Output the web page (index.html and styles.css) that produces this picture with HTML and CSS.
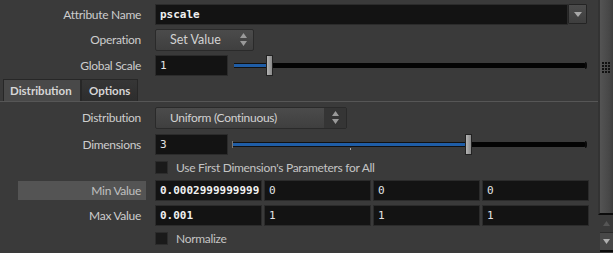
FILE: index.html
```html
<!DOCTYPE html>
<html>
<head>
<meta charset="utf-8">
<link rel="stylesheet" href="styles.css">
</head>
<body>
<div class="app">
  <div class="main">
    <div class="row r1">
      <div class="lbl">Attribute Name</div>
      <div class="field wide mono bold">pscale</div>
      <div class="menu-btn"><svg width="8" height="5" viewBox="0 0 8 5"><path d="M0 0H8L4 5Z" fill="#a8a8a8"/></svg></div>
    </div>
    <div class="row r2">
      <div class="lbl">Operation</div>
      <div class="combo op"><span class="combo-text">Set Value</span><span class="spin"><svg width="7" height="13" viewBox="0 0 7 13"><path d="M3.5 0L7 5H0Z M0 8H7L3.5 13Z" fill="#9a9a9a"/></svg></span></div>
    </div>
    <div class="row r3">
      <div class="lbl">Global Scale</div>
      <div class="field short mono">1</div>
      <div class="slider">
        <div class="track"><div class="fill" style="width:32px"></div></div>
        <div class="cap"></div>
        <div class="handle" style="left:32px"></div>
      </div>
    </div>
    <div class="tabs">
      <div class="tab active">Distribution</div>
      <div class="tab">Options</div>
    </div>
    <div class="pane">
      <div class="row p1">
        <div class="lbl">Distribution</div>
        <div class="combo dist"><span class="combo-text">Uniform (Continuous)</span><span class="spin dark"><svg width="7" height="13" viewBox="0 0 7 13"><path d="M3.5 0L7 5H0Z M0 8H7L3.5 13Z" fill="#9a9a9a"/></svg></span></div>
      </div>
      <div class="row p2">
        <div class="lbl">Dimensions</div>
        <div class="field short mono">3</div>
        <div class="slider s2">
          <div class="lcap"></div>
          <div class="track"><div class="fill" style="width:232px"></div></div>
          <div class="tick" style="left:117px"></div>
          <div class="cap"></div>
          <div class="handle" style="left:232px"></div>
        </div>
      </div>
      <div class="row p3">
        <div class="lbl"></div>
        <div class="check"></div>
        <div class="check-text">Use First Dimension's Parameters for All</div>
      </div>
      <div class="row p4">
        <div class="lbl hl">Min Value</div>
        <div class="fields">
          <div class="field cell mono bold">0.0002999999999</div>
          <div class="field cell mono">0</div>
          <div class="field cell mono">0</div>
          <div class="field cell mono">0</div>
        </div>
      </div>
      <div class="row p5">
        <div class="lbl">Max Value</div>
        <div class="fields">
          <div class="field cell mono bold">0.001</div>
          <div class="field cell mono">1</div>
          <div class="field cell mono">1</div>
          <div class="field cell mono">1</div>
        </div>
      </div>
      <div class="row p6">
        <div class="lbl"></div>
        <div class="check"></div>
        <div class="check-text">Normalize</div>
      </div>
    </div>
  </div>
  <div class="scrollbar">
    <div class="thumb">
      <svg class="grip" width="8" height="11" viewBox="0 0 8 11">
        <g fill="#111">
          <rect x="0" y="0" width="2" height="2"/><rect x="3" y="0" width="2" height="2"/><rect x="6" y="0" width="2" height="2"/>
          <rect x="0" y="3" width="2" height="2"/><rect x="3" y="3" width="2" height="2"/><rect x="6" y="3" width="2" height="2"/>
          <rect x="0" y="6" width="2" height="2"/><rect x="3" y="6" width="2" height="2"/><rect x="6" y="6" width="2" height="2"/>
          <rect x="0" y="9" width="2" height="2"/><rect x="3" y="9" width="2" height="2"/><rect x="6" y="9" width="2" height="2"/>
        </g>
      </svg>
    </div>
    <div class="sb-up"><svg width="7" height="5" viewBox="0 0 7 5"><path d="M3.5 0L7 5H0Z" fill="#555"/></svg></div>
    <div class="sb-down"><svg width="7" height="5" viewBox="0 0 7 5"><path d="M0 0H7L3.5 5Z" fill="#b0b0b0"/></svg></div>
  </div>
</div>
</body>
</html>
```

FILE: styles.css
```css
html, body {
  margin: 0;
  padding: 0;
  background: #3a3a3a;
}
body {
  width: 613px;
  height: 253px;
  overflow: hidden;
  font-family: "Lato", "Noto Sans", sans-serif;
  font-size: 12px;
  letter-spacing: -0.3px;
  color: #cfcfcf;
}
.app {
  display: flex;
  height: 253px;
}
.main {
  width: 598px;
  padding-top: 4px;
  box-sizing: border-box;
}
.row {
  display: flex;
  align-items: center;
  height: 21px;
}
.r2 { margin-top: 4px; }
.r3 { margin-top: 5px; }
.lbl {
  width: 146px;
  flex: none;
  text-align: right;
  padding-right: 5px;
  box-sizing: border-box;
  margin-right: 9px;
  color: #cdcdcd;
  white-space: nowrap;
}
.lbl.hl {
  margin-left: 18px;
  width: 128px;
  background: #545454;
  height: 19px;
  line-height: 19px;
  color: #c0c0c0;
}
.field {
  height: 21px;
  box-sizing: border-box;
  background: #131313;
  border: 1px solid #2b2b2b;
  color: #e4e4e4;
  padding-left: 4px;
  line-height: 19px;
  overflow: hidden;
  white-space: nowrap;
  letter-spacing: 0;
}
.mono {
  font-family: "DejaVu Sans Mono", monospace;
  font-size: 11px;
}
.bold { font-weight: bold; color: #f0f0f0; }
.wide { width: 413px; }
.short { width: 73px; }
.menu-btn {
  width: 19px;
  height: 20px;
  align-self: flex-start;
  box-sizing: border-box;
  border: 1px solid #242424;
  border-radius: 1px;
  background: linear-gradient(#4c4c4c, #3e3e3e);
  display: flex;
  align-items: center;
  justify-content: center;
}
.combo {
  height: 22px;
  box-sizing: border-box;
  border: 1px solid #2a2a2a;
  border-radius: 2px;
  background: linear-gradient(#4b4b4b, #3f3f3f);
  display: flex;
  align-items: center;
  color: #d2d2d2;
}
.combo-text {
  flex: 1;
  padding-left: 14px;
  white-space: nowrap;
}
.op .combo-text { font-size: 12.5px; letter-spacing: 0; }
.op { width: 99px; }
.dist { width: 192px; }
.spin {
  width: 19px;
  height: 20px;
  display: flex;
  align-items: center;
  justify-content: center;
}
.spin.dark { width: 22px; background: #353535; }
.slider {
  position: relative;
  width: 353px;
  height: 21px;
  margin-left: 6px;
}
.track {
  position: absolute;
  left: 0;
  right: 1px;
  top: 8px;
  height: 5px;
  background: #030303;
  border-radius: 0 2px 2px 0;
}
.fill {
  height: 3px;
  border-top: 1px solid #111;
  border-bottom: 1px solid #111;
  background: #1f5da6;
}
.cap {
  position: absolute;
  right: 0;
  top: 7px;
  width: 2px;
  height: 7px;
  background: #0a0a0a;
  border-radius: 0 2px 2px 0;
}
.lcap {
  position: absolute;
  left: -1px;
  top: 7px;
  width: 1px;
  height: 7px;
  background: #777;
}
.tick {
  position: absolute;
  top: 14px;
  width: 1px;
  height: 2px;
  background: #aaa;
}
.handle {
  position: absolute;
  top: 0;
  width: 7px;
  height: 21px;
  box-sizing: border-box;
  border: 1px solid #222;
  background: linear-gradient(90deg, #b4b4b4, #8a8a8a);
}
.s2 { margin-left: 5px; width: 354px; }
.tabs {
  display: flex;
  margin-top: 3px;
  padding-left: 3px;
  border-bottom: 1px solid #565656;
  height: 22px;
}
.tab {
  height: 22px;
  box-sizing: border-box;
  border: 1px solid #272727;
  border-bottom: none;
  font-weight: bold;
  font-size: 11.5px;
  letter-spacing: 0;
  line-height: 21px;
  color: #d6d6d6;
  background: linear-gradient(#363636, #2d2d2d);
}
.tab.active {
  background: #494949;
  width: 78px;
  padding: 0 0 0 6px;
}
.tab + .tab { width: 57px; padding: 0 0 0 7px; }
.pane { padding-top: 5px; }
.p2 { margin-top: 6px; }
.p3 { margin-top: 2px; }
.p4 { margin-top: 2px; }
.p5 { margin-top: 4px; }
.p6 { margin-top: 2px; }
.check {
  width: 13px;
  height: 13px;
  box-sizing: border-box;
  background: #1a1a1a;
  border: 1px solid #2c2c2c;
}
.check-text {
  margin-left: 8px;
  color: #c4c4c4;
  white-space: nowrap;
}
.fields {
  display: flex;
  gap: 2px;
}
.cell { width: 107px; }
.scrollbar {
  width: 15px;
  height: 253px;
  display: flex;
  flex-direction: column;
  background: #3a3a3a;
}
.thumb {
  height: 213px;
  flex: none;
  border-left: 2px solid #333;
  border-bottom: 2px solid #0c0c0c;
  background: linear-gradient(90deg, #545454, #474747 70%, #3e3e3e);
  position: relative;
}
.grip {
  position: absolute;
  left: 2px;
  top: 62px;
}
.sb-up {
  height: 17px;
  flex: none;
  display: flex;
  align-items: center;
  justify-content: center;
  padding-left: 2px;
}
.sb-down {
  height: 17px;
  flex: none;
  margin-left: 2px;
  border-top: 1px solid #2a2a2a;
  border-bottom: 2px solid #0c0c0c;
  background: #484848;
  display: flex;
  align-items: center;
  justify-content: center;
}
```
